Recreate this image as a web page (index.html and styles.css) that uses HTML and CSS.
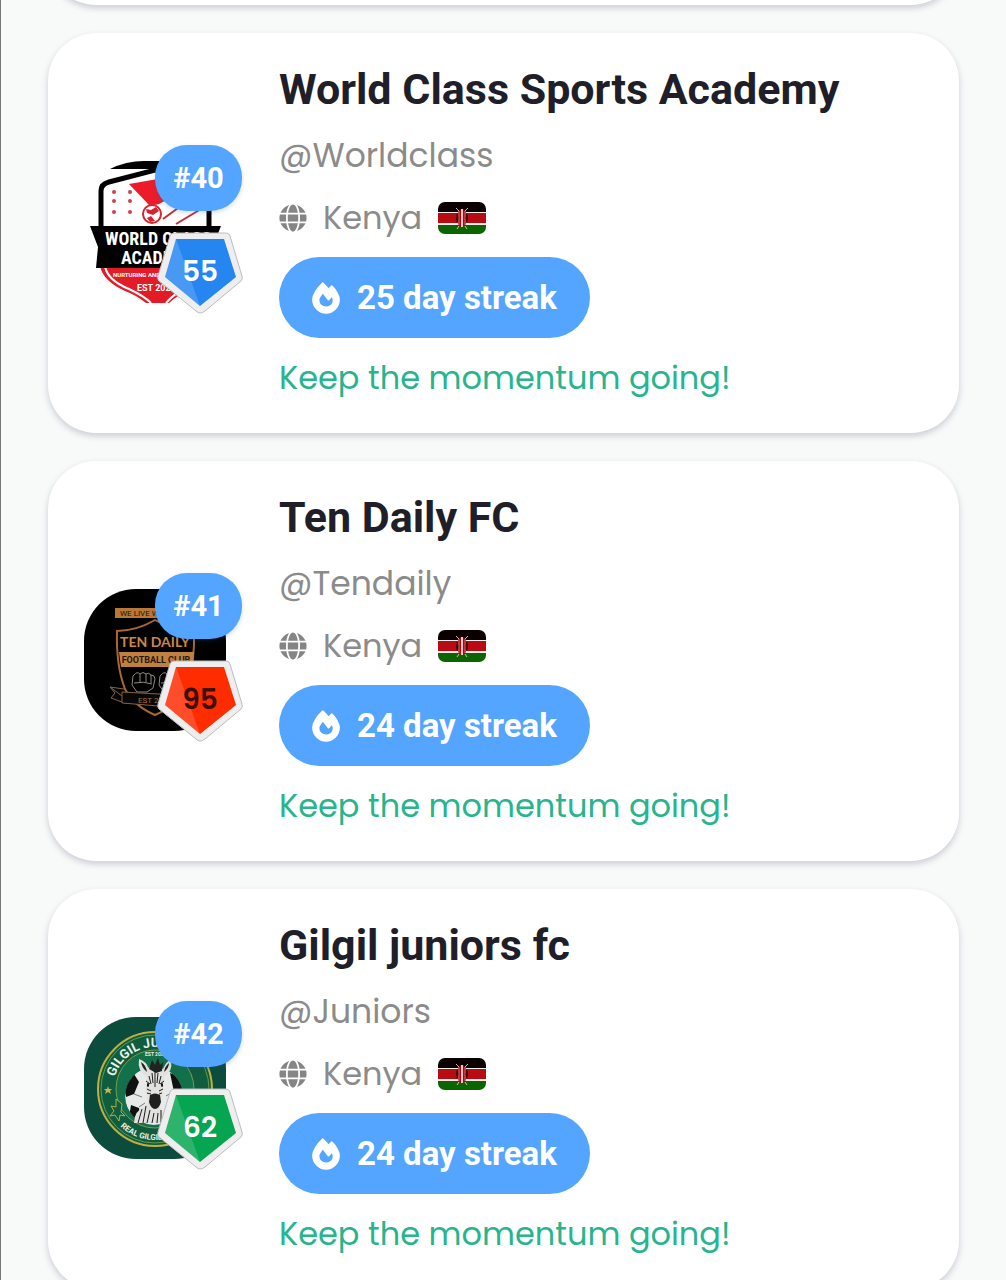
FILE: index.html
```html
<!DOCTYPE html>
<html lang="en">
<head>
    <meta charset="UTF-8">
    <meta name="viewport" content="width=device-width, initial-scale=1.0">
    <title>Streak Leaderboard</title>
    <link rel="stylesheet" href="styles.css">
</head>
<body>
    <!-- shared icons -->
    <svg class="sprite" aria-hidden="true">
        <symbol id="globe" viewBox="0 0 496 512">
            <path d="M336.500 160C322 70.700 287.800 8 248 8s-74 62.700-88.500 152h177zM152 256c0 22.200 1.200 43.500 3.300 64h185.300c2.100-20.500 3.300-41.800 3.300-64s-1.200-43.500-3.300-64H155.300c-2.100 20.500-3.300 41.800-3.300 64zm324.700-96c-28.600-67.900-86.500-120.400-158-141.600 24.400 33.800 41.200 84.700 50 141.600h108zM177.200 18.400C105.800 39.600 47.800 92.100 19.300 160h108c8.700-56.900 25.500-107.800 49.900-141.600zM487.400 192H372.700c2.100 21 3.300 42.500 3.300 64s-1.200 43-3.300 64h114.600c5.500-20.500 8.600-41.800 8.600-64s-3.100-43.500-8.500-64zM120 256c0-21.500 1.200-43 3.300-64H8.600C3.200 212.500 0 233.800 0 256s3.200 43.500 8.600 64h114.600c-2-21-3.200-42.500-3.200-64zm39.500 96c14.500 89.300 48.700 152 88.500 152s74-62.700 88.500-152h-177zm159.300 141.600c71.400-21.200 129.400-73.700 158-141.600h-108c-8.800 56.900-25.600 107.800-50 141.600zM19.300 352c28.600 67.900 86.500 120.400 158 141.600-24.400-33.800-41.200-84.700-50-141.600h-108z"/>
        </symbol>
        <symbol id="fire" viewBox="-16 -16 480 544">
            <path stroke="#fff" stroke-width="28" stroke-linejoin="round" d="M323.560 51.200c-20.800 19.300-39.580 39.590-56.220 59.970C240.080 73.620 206.280 35.530 168 0 69.740 91.170 0 209.960 0 281.600 0 408.850 100.290 512 224 512s224-103.150 224-230.400c0-53.270-51.980-163.140-124.440-230.400zm-19.470 340.650C282.430 407.010 255.720 416 226.860 416 154.710 416 96 368.260 96 290.750c0-38.610 24.310-72.630 72.790-130.750 6.930 7.980 98.830 125.340 98.830 125.340l58.630-66.880c4.140 6.850 7.910 13.550 11.270 19.970 27.350 52.190 15.810 118.970-33.430 153.420z"/>
        </symbol>
        <symbol id="kenya" viewBox="0 0 48 32">
            <path fill="#eee" d="M0 0h48v32H0z"/>
            <path fill="#0a0000" d="M0 0h48v10H0z"/>
            <path fill="#b80c12" d="M0 11h48v10H0z"/>
            <path fill="#0a6400" d="M0 23h48v9H0z"/>
            <path d="M18 6l3 3M30 6l-3 3M21 24l-2 3M27 24l2 3" stroke="#d9b9b4"/>
            <ellipse cx="24" cy="16" rx="5" ry="9" fill="#a8090e"/>
            <path fill="#4a0004" d="M19 11q4 5 0 10-2-5 0-10zM29 11q-4 5 0 10 2-5 0-10z"/>
            <path fill="#f0c4c4" d="M23 7h2v18h-2z"/>
            <path d="M21 9v14M27 9v14" stroke="#d46a6a"/>
        </symbol>
        <symbol id="pentagon" viewBox="0 0 88 84">
            <path d="M18 2h52q3 0 4 3l12 40q1 3-1 5L49 80q-5 4-9 0L3 50q-2-2-1-5L14 5q1-3 4-3z" fill="#eee" stroke="#bcbcbc"/>
            <path d="M20 8h48l12 38-36 29L9 46z" fill="currentColor"/>
            <path d="M20 8L9 46l35 29z" fill="#fff" opacity=".16"/>
        </symbol>
    </svg>

    <main class="leaderboard">
        <article class="card card-previous"></article>

        <article class="card">
            <div class="avatar">
                <svg class="logo" viewBox="0 0 142 142" role="img" aria-label="World Class Sports Academy logo">
                    <path d="M26 8Q42 0 60 0h40v8z"/>
                    <path d="M17 70V30q0-7 8-9l46-12 46 12q8 2 8 9v40" fill="#fff" stroke="#000" stroke-width="5"/>
                    <path d="M45 23l69-12v12L75 43l-9 2z" fill="#ed1c2b"/>
                    <path d="M74 42l34-26M79 58l45-33M92 63l30-18" stroke="#c92c37" stroke-width="2"/>
                    <g fill="#d3404a">
                        <circle cx="30" cy="31" r="2"/><circle cx="46" cy="31" r="2"/>
                        <circle cx="30" cy="40" r="2"/><circle cx="46" cy="40" r="2"/>
                        <circle cx="30" cy="51" r="2"/><circle cx="46" cy="51" r="2"/>
                    </g>
                    <circle cx="68" cy="53" r="9" fill="#fff" stroke="#d8232f" stroke-width="2"/>
                    <path d="M62 48l5 1 5-3 3 4-6 4-6-2zM63 57l4-2 4 5-5 1z" fill="#d8232f"/>
                    <path d="M16 105h113q-2 14-24 24-11 5-20 13H62q-10-8-21-12-22-10-25-25z" fill="#e31b27"/>
                    <path d="M21 105q2 14 24 23 15 7 22 14M124 105q-3 14-24 23-10 5-18 14" fill="none" stroke="#fff" stroke-width="2"/>
                    <path d="M6 65h131l-8 20 6 22H12l2-21z"/>
                    <g fill="#fff">
                        <text class="logo-condensed" x="21" y="84">WORLD CLASS</text>
                        <text class="logo-condensed" x="37" y="103">ACADEMY</text>
                        <text class="logo-tiny" x="29" y="116">NURTURING AND DEVELOPING</text>
                        <text class="logo-small" x="53" y="130">EST 2020</text>
                    </g>
                </svg>
                <span class="rank">#40</span>
                <div class="level level-blue"><svg><use href="#pentagon"/></svg><span>55</span></div>
            </div>
            <div class="info">
                <h2>World Class Sports Academy</h2>
                <p class="handle">@Worldclass</p>
                <p class="country"><svg class="globe"><use href="#globe"/></svg>Kenya<svg class="flag"><use href="#kenya"/></svg></p>
                <div class="streak"><svg><use href="#fire"/></svg>25 day streak</div>
                <p class="message">Keep the momentum going!</p>
            </div>
        </article>

        <article class="card">
            <div class="avatar">
                <svg class="logo" viewBox="0 0 142 142" role="img" aria-label="Ten Daily FC logo">
                    <path d="M0 0h142v142H0z"/>
                    <path d="M31 19h80v10H31z" fill="#b87838"/>
                    <text class="logo-motto" x="36" y="27" fill="#21130a">WE LIVE WE PLAY</text>
                    <path d="M71 31Q52 42 33 42q-1 35 8 58 9 17 30 26 21-9 30-26 10-23 9-58-20 0-39-11z" fill="none" stroke="#a96832" stroke-width="2"/>
                    <path d="M35 63h75l-1 15H37z" fill="#c08040"/>
                    <text class="logo-name" x="71" y="58" fill="#cc8746" text-anchor="middle">TEN DAILY</text>
                    <text class="logo-football" x="72" y="74" fill="#28170a" text-anchor="middle">FOOTBALL CLUB</text>
                    <path id="fist" d="M50 86q3-4 6-1 3-3 6 0 3-2 5 1 4 0 4 4l-2 9-6 4H53l-5-7 1-9zM56 85v8M62 85v8M67 86v8M50 94q10-2 18 1" fill="none" stroke="#8f8982"/>
                    <use href="#fist" x="27"/>
                    <path d="M38 103l73 4v13l-73-6zM38 107l-12-9 14 2M38 113l-11-4 4-5-5-6" fill="#080706" stroke="#80644b"/>
                    <text class="logo-motto" x="54" y="114" fill="#a57447">EST 2020</text>
                </svg>
                <span class="rank">#41</span>
                <div class="level level-red"><svg><use href="#pentagon"/></svg><span>95</span></div>
            </div>
            <div class="info">
                <h2>Ten Daily FC</h2>
                <p class="handle">@Tendaily</p>
                <p class="country"><svg class="globe"><use href="#globe"/></svg>Kenya<svg class="flag"><use href="#kenya"/></svg></p>
                <div class="streak"><svg><use href="#fire"/></svg>24 day streak</div>
                <p class="message">Keep the momentum going!</p>
            </div>
        </article>

        <article class="card">
            <div class="avatar">
                <svg class="logo" viewBox="0 0 142 142" role="img" aria-label="Gilgil juniors fc logo">
                    <defs>
                        <path id="arc-top" d="M29 72a42 42 0 0 1 84 0"/>
                        <path id="arc-bottom" d="M20 72a51 51 0 0 0 102 0"/>
                        <clipPath id="ball"><circle cx="70" cy="79" r="29"/></clipPath>
                    </defs>
                    <path d="M0 0h142v142H0z" fill="#0b4c3c"/>
                    <circle cx="71" cy="72" r="57" fill="#0f5c3e" stroke="#bdb044" stroke-width="2"/>
                    <circle cx="71" cy="72" r="54" fill="none" stroke="#6f9942"/>
                    <circle cx="71" cy="72" r="39" fill="#12714a" stroke="#7f9a4e"/>
                    <g fill="#e9f1e9">
                        <text class="logo-arc"><textPath href="#arc-top" startOffset="12">GILGIL JUNIORS</textPath></text>
                        <text class="logo-mini" x="61" y="39">EST 2020</text>
                        <text class="logo-arc-small"><textPath href="#arc-bottom" startOffset="42">REAL GILGIL</textPath></text>
                    </g>
                    <path d="M24 69l1 3h3l-2 2 1 3-3-2-3 2 1-3-2-2h3z" fill="#c5b84a"/>
                    <path d="M32 82l6 5-1 8 4 4-5-1-1 6-4-6-5 1 4-5-3-5 5 1z" fill="#0f5c3e" stroke="#b5ac48"/>
                    <g clip-path="url(#ball)">
                        <circle cx="70" cy="79" r="29" fill="#e8eaea"/>
                        <path d="M40 70l10-13 5 8-5 12-8 3zM86 56l10 4 6 18-12-3zM47 88l8 3 2 18-12-9z" fill="#111"/>
                        <path d="M50 77l8 3M55 90l6-4M90 74l-8 5" stroke="#777"/>
                    </g>
                    <path d="M55 42q7 2 10 10h14q4-9 8-9 2 12-7 17l-1 14-3 16 9 16H50q0-12 12-18l2-3-3-15 2-10q-10-6-8-18z" fill="#e1e2df"/>
                    <path d="M57 45q5 3 6 10-5-4-6-10zM85 46q-4 3-5 9 5-4 5-9zM65 52l3-9 3 5 3-7 2 7 3-3-1 9-6 2z" fill="#222"/>
                    <path d="M71 54v16M68 56l1 10M74 56l-1 10M65 59l2 8M77 59l-2 8M62 64l4 3M80 64l-4 3M63 72l4 2M79 72l-4 2M63 76l4 1M78 76l-3 1M58 92l-4 14M62 89l-3 17M66 93l-3 13M70 96l-2 10M74 96l-1 10M77 93v13M81 97l2 9" stroke="#1b1b1b"/>
                    <path d="M66 78q5-3 10 0l1 7q-2 7-6 7t-6-7z" fill="#202020"/>
                    <ellipse cx="64" cy="68" rx="1" ry="2"/><ellipse cx="78" cy="68" rx="1" ry="2"/>
                </svg>
                <span class="rank">#42</span>
                <div class="level level-green"><svg><use href="#pentagon"/></svg><span>62</span></div>
            </div>
            <div class="info">
                <h2>Gilgil juniors fc</h2>
                <p class="handle">@Juniors</p>
                <p class="country"><svg class="globe"><use href="#globe"/></svg>Kenya<svg class="flag"><use href="#kenya"/></svg></p>
                <div class="streak"><svg><use href="#fire"/></svg>24 day streak</div>
                <p class="message">Keep the momentum going!</p>
            </div>
        </article>
    </main>
</body>
</html>
```

FILE: styles.css
```css
* {
    box-sizing: border-box;
}

body {
    height: 100vh;
    margin: 0;
    overflow: hidden;
    background: #f8f9f9;
    border-left: 1px solid #777;
    font-family: Poppins, Inter, sans-serif;
}

.sprite {
    display: none;
}

h2, p {
    margin: 0;
}

.leaderboard {
    display: flex;
    flex-direction: column;
    gap: 28px;
    padding: 0 47px;
}

.card {
    display: flex;
    align-items: center;
    flex-shrink: 0;
    gap: 53px;
    padding: 28px 36px 31px;
    background: #fff;
    border-radius: 48px;
    box-shadow: 0 3px 6px rgba(40, 50, 90, 0.22);
}

/* scrolled out of view, only its lower edge shows */
.card-previous {
    height: 400px;
    margin-top: -395px;
}

.avatar {
    position: relative;
    flex-shrink: 0;
    width: 142px;
    height: 142px;
}

.logo {
    display: block;
    width: 142px;
    height: 142px;
    border-radius: 52px;
}

.rank {
    position: absolute;
    top: -16px;
    right: -16px;
    width: 87px;
    height: 66px;
    border-radius: 32px;
    background: #54a5ff;
    color: #fff;
    font: bold 29px/66px Roboto, sans-serif;
    text-align: center;
    box-shadow: 0 2px 5px rgba(40, 90, 150, 0.2);
}

.level {
    position: absolute;
    right: -18px;
    bottom: -12px;
    width: 88px;
    height: 84px;
    color: #fff;
    font-size: 28px;
    font-weight: 600;
    line-height: 82px;
    text-align: center;
}

.level svg {
    position: absolute;
    inset: 0;
    width: 88px;
    height: 84px;
}

.level span {
    position: relative;
}

.level-blue svg {
    color: #2586f1;
}

.level-red {
    color: #3c0f0c;
}

.level-red svg {
    color: #ff2c00;
}

.level-green svg {
    color: #06a552;
}

.info {
    display: flex;
    flex-direction: column;
    align-items: flex-start;
    gap: 16px;
    min-width: 0;
}

.info h2 {
    color: #201f29;
    font: bold 43px/56px Roboto, sans-serif;
}

.handle, .country {
    color: #8b8b8b;
    font-size: 33px;
    line-height: 46px;
}

.country {
    display: flex;
    align-items: center;
    gap: 16px;
    font-size: 32px;
}

.globe {
    width: 28px;
    height: 28px;
    fill: #858585;
}

.flag {
    width: 48px;
    height: 32px;
    border-radius: 7px;
}

.streak {
    display: flex;
    align-items: center;
    gap: 17px;
    height: 81px;
    padding: 0 33px;
    border-radius: 41px;
    background: #54a5ff;
    color: #fff;
    font: bold 33px/48px Roboto, sans-serif;
}

.streak svg {
    width: 28px;
    height: 32px;
    fill: #fff;
}

.message {
    color: #27b48e;
    font-size: 32px;
    line-height: 48px;
}

/* lettering inside the club crests */
.logo-condensed {
    font: bold 18px "Roboto Condensed", "Liberation Sans Narrow", Roboto, sans-serif;
}

.logo-name {
    font: bold 14px Lato, sans-serif;
}

.logo-football {
    font: bold 9px "Liberation Sans Narrow", Roboto, sans-serif;
}

.logo-small {
    font: bold 9px Roboto, sans-serif;
}

.logo-motto {
    font: 8px Roboto, sans-serif;
}

.logo-tiny {
    font: bold 6px Roboto, sans-serif;
}

.logo-mini {
    font: bold 5px Roboto, sans-serif;
}

.logo-arc {
    font: bold 13px "Liberation Sans Narrow", Roboto, sans-serif;
}

.logo-arc-small {
    font: bold 8px "Liberation Sans Narrow", Roboto, sans-serif;
}
```
